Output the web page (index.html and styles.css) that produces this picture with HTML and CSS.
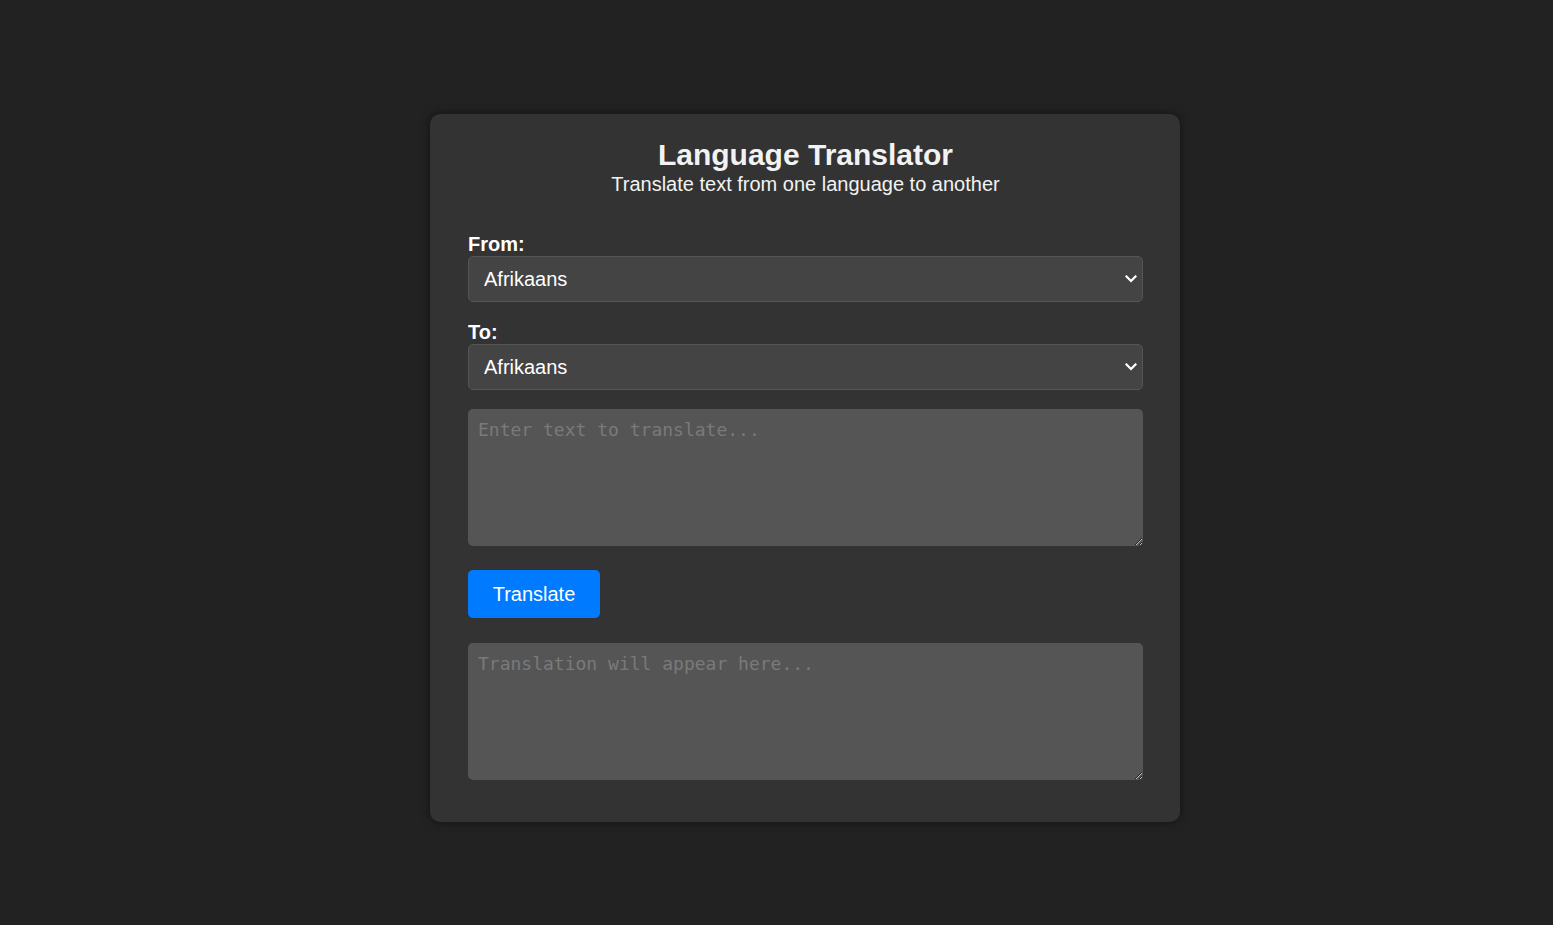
FILE: index.html
```html
<!DOCTYPE html>
<html lang="en">
<head>
<meta charset="utf-8">
<title>Language Translator</title>
<link rel="stylesheet" href="styles.css">
</head>
<body>
<div class="card">
  <h1 class="title">Language Translator</h1>
  <p class="subtitle">Translate text from one language to another</p>
  <div class="field">
    <label class="label" for="from">From:</label>
    <div class="select-wrap">
      <select id="from" class="select"><option>Afrikaans</option><option>English</option></select>
      <svg class="chevron" width="12" height="8" viewBox="0 0 12 8"><path d="M1.5 1.5 L6 6 L10.5 1.5" fill="none" stroke="#ffffff" stroke-width="2.2" stroke-linecap="square"/></svg>
    </div>
  </div>
  <div class="field">
    <label class="label" for="to">To:</label>
    <div class="select-wrap">
      <select id="to" class="select"><option>Afrikaans</option><option>English</option></select>
      <svg class="chevron" width="12" height="8" viewBox="0 0 12 8"><path d="M1.5 1.5 L6 6 L10.5 1.5" fill="none" stroke="#ffffff" stroke-width="2.2" stroke-linecap="square"/></svg>
    </div>
  </div>
  <textarea class="textarea input-text" placeholder="Enter text to translate..."></textarea>
  <button class="btn">Translate</button>
  <textarea class="textarea output-text" placeholder="Translation will appear here..." readonly></textarea>
</div>
</body>
</html>
```
FILE: styles.css
```css
html, body {
  margin: 0;
  padding: 0;
  background: #222222;
  font-family: "Liberation Sans", Arial, sans-serif;
  color: #ffffff;
}
body {
  padding-top: 114px;
  height: 925px;
  box-sizing: border-box;
}
.card {
  width: 750px;
  box-sizing: border-box;
  margin-left: 430px;
  background: #333333;
  border-radius: 10px;
  padding: 23px 37px 42px 38px;
  box-shadow: 0 0 10px rgba(0, 0, 0, 0.5);
  display: flex;
  flex-direction: column;
}
.title {
  margin: 0;
  font-size: 30px;
  font-weight: bold;
  text-align: center;
  color: #f2f2f2;
  line-height: 36px;
}
.subtitle {
  margin: 0 0 37px;
  font-size: 20px;
  line-height: 23px;
  text-align: center;
  color: #f2f2f2;
}
.field {
  display: flex;
  flex-direction: column;
  margin-bottom: 19px;
}
.field + .field { margin-bottom: 19px; }
.label {
  font-size: 20px;
  font-weight: bold;
  line-height: 23px;
  margin-bottom: 0;
}
.select-wrap {
  position: relative;
  display: flex;
  flex-direction: column;
}
.select {
  appearance: none;
  -webkit-appearance: none;
  height: 46px;
  box-sizing: border-box;
  background: #444444;
  color: #ffffff;
  border: 1px solid #555555;
  border-radius: 5px;
  font-family: "Liberation Sans", Arial, sans-serif;
  font-size: 20px;
  padding: 0 15px;
}
.chevron {
  position: absolute;
  right: 6px;
  top: 19px;
  pointer-events: none;
}
.textarea {
  height: 137px;
  box-sizing: border-box;
  background: #555555;
  color: #ffffff;
  border: none;
  border-radius: 5px;
  padding: 10px;
  font-family: "DejaVu Sans Mono", "Liberation Mono", monospace;
  font-size: 18px;
  color-scheme: dark;
  resize: vertical;
}
.textarea::placeholder { color: #7a7a7a; }
.btn {
  align-self: flex-start;
  margin: 24px 0 25px;
  height: 48px;
  width: 132px;
  padding: 0;
  background: #007bff;
  color: #ffffff;
  border: none;
  border-radius: 5px;
  font-family: "Liberation Sans", Arial, sans-serif;
  font-size: 20px;
  cursor: pointer;
}
```
